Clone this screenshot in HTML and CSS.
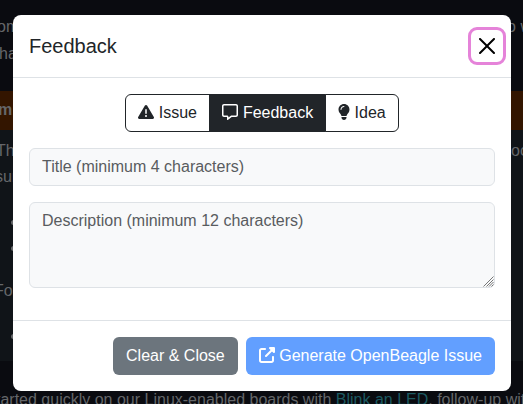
FILE: index.html
```html
<!DOCTYPE html>
<html lang="en">
<head>
<meta charset="utf-8">
<title>Feedback</title>
<link rel="stylesheet" href="styles.css">
</head>
<body>
<main class="page">
  <div class="intro">
    <div class="line"><span class="cut-om">om</span><span class="right-w">o w</span></div>
    <div class="line"><span class="cut-ha">ha</span></div>
  </div>
  <section class="note">
    <div class="note-title">m</div>
    <div class="line first"><span class="cut-th">Thi</span><span class="right-oc">oc</span></div>
    <div class="line"><span class="cut-sun">sun</span></div>
    <ul class="dots"><li></li><li></li></ul>
    <div class="line"><span class="cut-fo">Fo</span></div>
    <ul class="dots last"><li></li></ul>
  </section>
  <p class="outro">started quickly on our Linux-enabled boards with <a>Blink an LED</a>, follow-up with</p>
</main>
<div class="backdrop">
  <div class="modal" role="dialog">
    <header class="modal-header">
      <h5>Feedback</h5>
      <button class="close" aria-label="Close"><svg viewBox="0 0 16 16"><path d="M.293.293a1 1 0 0 1 1.414 0L8 6.586 14.293.293a1 1 0 1 1 1.414 1.414L9.414 8l6.293 6.293a1 1 0 0 1-1.414 1.414L8 9.414l-6.293 6.293a1 1 0 0 1-1.414-1.414L6.586 8 .293 1.707a1 1 0 0 1 0-1.414z"/></svg></button>
    </header>
    <div class="modal-body">
      <div class="group">
        <button class="btn outline"><svg class="icon" viewBox="0 0 512 512"><path d="M256 32c14.2 0 27.3 7.5 34.5 19.8l216 368c7.3 12.4 7.3 27.7 .2 40.1S486.3 480 472 480H40c-14.3 0-27.6-7.7-34.7-20.1s-7-27.8 .2-40.1l216-368C228.7 39.5 241.8 32 256 32zm0 128c-13.3 0-24 10.7-24 24V296c0 13.3 10.7 24 24 24s24-10.7 24-24V184c0-13.3-10.7-24-24-24zm32 224a32 32 0 1 0-64 0 32 32 0 1 0 64 0z"/></svg> Issue</button>
        <button class="btn outline active"><svg class="icon" viewBox="0 0 512 512"><path d="M160 368c26.500 0 48 21.500 48 48v16l72.500-54.400c8.300-6.200 18.400-9.600 28.800-9.600H448c8.800 0 16-7.200 16-16V64c0-8.800-7.200-16-16-16H64c-8.800 0-16 7.200-16 16V352c0 8.800 7.200 16 16 16h96zm48 124l-.2 .2-5.100 3.800-17.100 12.800c-4.800 3.600-11.300 4.200-16.800 1.500s-8.800-8.200-8.800-14.300V416H64c-35.300 0-64-28.700-64-64V64C0 28.700 28.700 0 64 0H448c35.300 0 64 28.700 64 64V352c0 35.300-28.700 64-64 64H309.300L208 492z"/></svg> Feedback</button>
        <button class="btn outline"><svg class="icon narrow" viewBox="0 0 384 512"><path d="M272 384c9.600-31.900 29.500-59.100 49.200-86.200c5.200-7.100 10.400-14.200 15.400-21.400c19.800-28.500 31.400-63 31.400-100.300C368 78.800 289.200 0 192 0S16 78.800 16 176c0 37.300 11.600 71.900 31.400 100.300c5 7.200 10.200 14.300 15.400 21.400c19.800 27.100 39.700 54.400 49.200 86.200H272zM192 512c44.200 0 80-35.800 80-80V416H112v16c0 44.200 35.800 80 80 80zM112 176c0 8.800-7.200 16-16 16s-16-7.200-16-16c0-61.900 50.100-112 112-112c8.800 0 16 7.200 16 16s-7.200 16-16 16c-44.200 0-80 35.800-80 80z"/></svg> Idea</button>
      </div>
      <input class="field" type="text" placeholder="Title (minimum 4 characters)">
      <div class="area-wrap">
        <textarea class="field area" placeholder="Description (minimum 12 characters)"></textarea>
        <svg class="grip" viewBox="0 0 11 11"><path d="M.5 10.500L10.500.5M3.500 10.500L10.500 3.500M6 10.500L10.500 6M8.500 10.500L10.500 8.500"/></svg>
      </div>
    </div>
    <footer class="modal-footer">
      <button class="btn secondary">Clear &amp; Close</button>
      <button class="btn primary"><svg class="icon" viewBox="0 0 512 512"><path d="M352 0c-12.900 0-24.600 7.800-29.600 19.800s-2.200 25.700 6.900 34.900L370.700 96 201.400 265.400c-12.500 12.500-12.500 32.800 0 45.300s32.800 12.500 45.300 0L416 141.300l41.400 41.400c9.200 9.200 22.900 11.900 34.900 6.900s19.800-16.600 19.800-29.600V32c0-17.700-14.300-32-32-32H352zM80 32C35.800 32 0 67.800 0 112V432c0 44.200 35.800 80 80 80H400c44.200 0 80-35.800 80-80V320c0-17.700-14.300-32-32-32s-32 14.300-32 32V432c0 8.800-7.200 16-16 16H80c-8.800 0-16-7.200-16-16V112c0-8.800 7.200-16 16-16H192c17.700 0 32-14.300 32-32s-14.300-32-32-32H80z"/></svg> Generate OpenBeagle Issue</button>
    </footer>
  </div>
</div>
</body>
</html>
```
FILE: styles.css
```css
* { box-sizing: border-box; }
body {
  margin: 0;
  height: 404px;
  overflow: hidden;
  background: #0a0b10;
  color: #65676a;
  font: 16px/26px "Liberation Sans", Arial, sans-serif;
}
.page { height: 404px; overflow: hidden; }
.intro { height: 91px; padding-top: 14px; }
.intro .line { line-height: 27px; margin-top: -1px; }
.intro .line + .line { margin-top: 0; }
.line { display: flex; justify-content: space-between; white-space: nowrap; }
.cut-om { margin-left: -3px; }
.cut-ha { margin-left: -1px; }
.cut-th { margin-left: -4px; }
.cut-sun { margin-left: -5px; }
.cut-fo { margin-left: -6px; }
.right-w { margin-right: -9px; }
.right-oc { margin-right: -5px; }
.note { height: 270px; background: #101418; }
.note-title {
  height: 39px;
  padding-top: 6px;
  margin-bottom: 8px;
  background: #331500;
  font-weight: 700;
  text-indent: -2px;
}
.dots { list-style: none; margin: 19px 0 17px; padding: 0 0 0 11px; }
.dots li { height: 26px; display: flex; align-items: center; }
.dots li::before { content: ""; width: 5px; height: 5px; border-radius: 50%; background: #65676a; }
.outro { margin: 25px 0 0 -12px; line-height: 27px; white-space: nowrap; }
.outro a { color: #1c5a62; }
.backdrop { position: absolute; inset: 0; padding: 15px 12px 13px 13px; }
.modal {
  display: flex;
  flex-direction: column;
  height: 376px;
  background: #fff;
  border-radius: 8px;
  color: #212529;
  line-height: 24px;
}
.modal-header {
  display: flex;
  align-items: center;
  justify-content: space-between;
  height: 63px;
  padding: 0 8px 0 16px;
  border-bottom: 1px solid #dee2e6;
}
.modal-header h5 { margin: 0; font-size: 20px; font-weight: 400; line-height: 30px; }
.close {
  display: flex;
  align-items: center;
  justify-content: center;
  width: 32px;
  height: 32px;
  padding: 0;
  border: 0;
  border-radius: 6px;
  background: #fff;
  outline: 3px solid #e583d9;
}
.close svg { width: 16px; height: 16px; }
.modal-body { display: flex; flex-direction: column; flex: 1; gap: 16px; padding: 16px; }
.group { display: flex; align-self: center; }
.btn {
  height: 38px;
  padding: 6px 12px;
  border: 1px solid transparent;
  border-radius: 6px;
  color: #fff;
  font: inherit;
  white-space: nowrap;
}
.icon { width: 16px; height: 16px; vertical-align: -2px; fill: currentColor; }
.icon.narrow { width: 12px; }
.outline { border-color: #212529; background: #fff; color: #212529; }
.outline:first-child { min-width: 85px; padding-right: 12.500px; text-align: left; }
.outline + .outline { margin-left: -1px; }
.outline:not(:first-child) { border-top-left-radius: 0; border-bottom-left-radius: 0; }
.outline:not(:last-child) { border-top-right-radius: 0; border-bottom-right-radius: 0; }
.outline.active { background: #212529; color: #fff; }
.field {
  display: block;
  width: 100%;
  height: 38px;
  padding: 6px 12px;
  border: 1px solid #dee2e6;
  border-radius: 6px;
  background: #f8f9fa;
  font: inherit;
}
.field::placeholder { color: #595c5f; opacity: 1; }
.area-wrap { position: relative; }
.area { height: 86px; resize: none; }
.grip {
  position: absolute;
  right: 1px;
  bottom: 1px;
  width: 11px;
  height: 11px;
  fill: none;
  stroke: #777;
  stroke-width: 1;
}
.modal-footer {
  display: flex;
  align-items: center;
  justify-content: flex-end;
  gap: 8px;
  height: 71px;
  padding: 0 16px;
  border-top: 1px solid #dee2e6;
}
.secondary { background: #6c757d; }
.primary { background: #629fff; }
```
